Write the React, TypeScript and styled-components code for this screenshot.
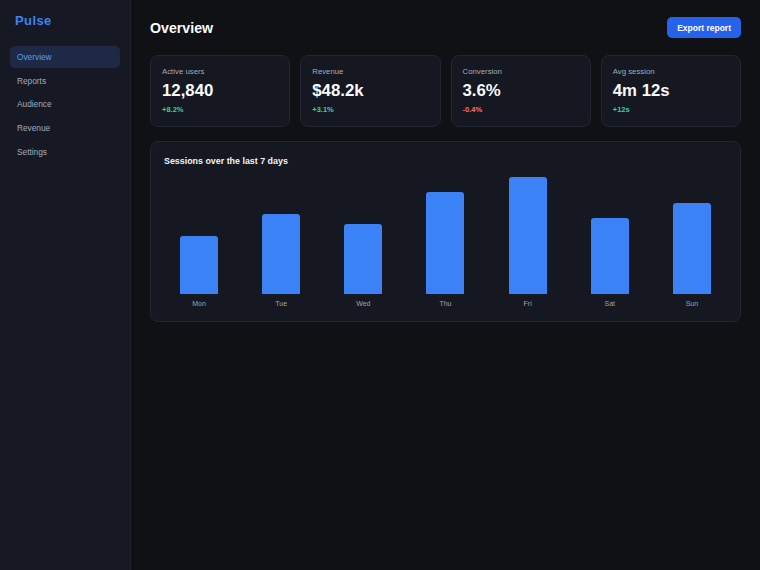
import styled, { createGlobalStyle } from "styled-components";

const GlobalStyle = createGlobalStyle`
  html, body {
    margin: 0;
    padding: 0;
    background: #0f1115;
  }
  body {
    font-family: "Liberation Sans", Arial, sans-serif;
    color: #f3f4f6;
  }
  * {
    box-sizing: border-box;
  }
`;

interface Stat {
  label: string;
  value: string;
  delta: string;
  up: boolean;
}

const stats: Stat[] = [
  { label: "Active users", value: "12,840", delta: "+8.2%", up: true },
  { label: "Revenue", value: "$48.2k", delta: "+3.1%", up: true },
  { label: "Conversion", value: "3.6%", delta: "-0.4%", up: false },
  { label: "Avg session", value: "4m 12s", delta: "+12s", up: true },
];

const sessions = [
  { day: "Mon", height: 58 },
  { day: "Tue", height: 80 },
  { day: "Wed", height: 70 },
  { day: "Thu", height: 102 },
  { day: "Fri", height: 117 },
  { day: "Sat", height: 76 },
  { day: "Sun", height: 91 },
];

const navItems = ["Overview", "Reports", "Audience", "Revenue", "Settings"];

const Layout = styled.div`
  display: flex;
  min-height: 570px;
  width: 760px;
`;

const Sidebar = styled.aside`
  width: 131px;
  flex-shrink: 0;
  background: #161923;
  border-right: 1px solid #1d2130;
  padding: 12px 10px;
`;

const Brand = styled.div`
  font-size: 13px;
  font-weight: 700;
  color: #3b82f6;
  letter-spacing: 0.4px;
  padding-left: 5px;
  line-height: 18px;
  margin-bottom: 16px;
`;

const Nav = styled.nav`
  display: flex;
  flex-direction: column;
  gap: 1.7px;
`;

const NavItem = styled.div<{ $active?: boolean }>`
  height: 22px;
  display: flex;
  align-items: center;
  padding: 0 7px;
  border-radius: 5px;
  font-size: 8.3px;
  color: ${(p) => (p.$active ? "#5b9cf6" : "#a3abba")};
  background: ${(p) => (p.$active ? "#1d2945" : "transparent")};
`;

const Main = styled.main`
  flex: 1;
  padding: 17px 19px 20px 19px;
  background: #0f1115;
`;

const Header = styled.header`
  display: flex;
  align-items: center;
  justify-content: space-between;
  height: 21px;
  margin-bottom: 17px;
`;

const Title = styled.h1`
  margin: 0;
  font-size: 14.2px;
  font-weight: 700;
  color: #f9fafb;
`;

const ExportButton = styled.button`
  font-family: inherit;
  font-size: 8.5px;
  font-weight: 700;
  color: #ffffff;
  background: #2563eb;
  border: none;
  border-radius: 5px;
  height: 21px;
  padding: 0 10px;
`;

const StatGrid = styled.section`
  display: grid;
  grid-template-columns: repeat(4, 1fr);
  gap: 10px;
  margin-bottom: 14px;
`;

const Card = styled.div`
  background: #151821;
  border: 1px solid #222632;
  border-radius: 8px;
`;

const StatCard = styled(Card)`
  padding: 9px 11px 10px;
`;

const StatLabel = styled.div`
  font-size: 7.8px;
  line-height: 13px;
  color: #a3abba;
  margin-bottom: 1px;
`;

const StatValue = styled.div`
  font-size: 16.8px;
  font-weight: 700;
  line-height: 24px;
  color: #f9fafb;
`;

const StatDelta = styled.div<{ $up: boolean }>`
  font-size: 7.5px;
  font-weight: 600;
  line-height: 12px;
  margin-top: 1px;
  color: ${(p) => (p.$up ? "#34d399" : "#f87171")};
`;

const ChartCard = styled(Card)`
  padding: 12px 13px 11px;
`;

const ChartTitle = styled.h2`
  margin: 0 0 6px;
  font-size: 8.9px;
  font-weight: 700;
  line-height: 14px;
  color: #f3f4f6;
`;

const Bars = styled.div`
  display: grid;
  grid-template-columns: repeat(7, 1fr);
  gap: 12px;
`;

const BarColumn = styled.div`
  display: flex;
  flex-direction: column;
  align-items: center;
`;

const BarTrack = styled.div`
  height: 120px;
  width: 100%;
  display: flex;
  align-items: flex-end;
  justify-content: center;
`;

const Bar = styled.div`
  width: 38px;
  background: #3b82f6;
  border-radius: 3px 3px 0 0;
`;

const BarLabel = styled.div`
  margin-top: 4px;
  font-size: 7px;
  line-height: 12px;
  color: #9ca3af;
`;

export default function App() {
  return (
    <>
      <GlobalStyle />
      <Layout>
        <Sidebar>
          <Brand>Pulse</Brand>
          <Nav>
            {navItems.map((item) => (
              <NavItem key={item} $active={item === "Overview"}>
                {item}
              </NavItem>
            ))}
          </Nav>
        </Sidebar>
        <Main>
          <Header>
            <Title>Overview</Title>
            <ExportButton>Export report</ExportButton>
          </Header>
          <StatGrid>
            {stats.map((s) => (
              <StatCard key={s.label}>
                <StatLabel>{s.label}</StatLabel>
                <StatValue>{s.value}</StatValue>
                <StatDelta $up={s.up}>{s.delta}</StatDelta>
              </StatCard>
            ))}
          </StatGrid>
          <ChartCard>
            <ChartTitle>Sessions over the last 7 days</ChartTitle>
            <Bars>
              {sessions.map((s) => (
                <BarColumn key={s.day}>
                  <BarTrack>
                    <Bar style={{ height: s.height }} />
                  </BarTrack>
                  <BarLabel>{s.day}</BarLabel>
                </BarColumn>
              ))}
            </Bars>
          </ChartCard>
        </Main>
      </Layout>
    </>
  );
}
